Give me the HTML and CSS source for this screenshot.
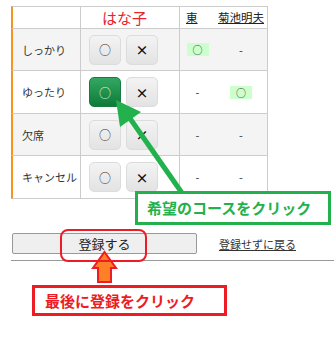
FILE: index.html
```html
<html>
<head>
  <meta charset="UTF-8">
  <link rel="stylesheet" href="styles.css">
</head>
<body>
  <div class="page">
    <table class="entry">
      <tr class="head">
        <th class="label"></th>
        <th class="pick"><span class="name">はな子</span></th>
        <th class="other"><a class="member m1">東</a></th>
        <th class="other last"><a class="member m2">菊池明夫</a></th>
      </tr>
      <tr class="row odd">
        <td class="label">しっかり</td>
        <td class="pick"><button class="mark">○</button><button class="mark cross">×</button></td>
        <td class="other"><span class="ok">○</span></td>
        <td class="other last">-</td>
      </tr>
      <tr class="row even">
        <td class="label">ゆったり</td>
        <td class="pick"><button class="mark on">○</button><button class="mark cross">×</button></td>
        <td class="other">-</td>
        <td class="other last"><span class="ok">○</span></td>
      </tr>
      <tr class="row odd">
        <td class="label">欠席</td>
        <td class="pick"><button class="mark">○</button><button class="mark cross">×</button></td>
        <td class="other">-</td>
        <td class="other last">-</td>
      </tr>
      <tr class="row even">
        <td class="label">キャンセル</td>
        <td class="pick"><button class="mark">○</button><button class="mark cross">×</button></td>
        <td class="other">-</td>
        <td class="other last">-</td>
      </tr>
    </table>

    <div class="actions">
      <button class="submit">登録する</button>
      <a class="back">登録せずに戻る</a>
    </div>
  </div>

  <!-- annotations drawn on top of the screenshot -->
  <svg class="marks" width="334" height="339" viewBox="0 0 334 339">
    <line x1="182" y1="193" x2="129" y2="117" stroke="#22b14c" stroke-width="5"/>
    <polygon points="116,100 141,112 120,127" fill="#22b14c"/>
    <polygon points="104.5,252 116,268 111,268 111,282 98,282 98,268 93,268" fill="#ff7f27" stroke="#ed1c24" stroke-width="2" stroke-linejoin="miter"/>
  </svg>
  <div class="ring"></div>
  <div class="note note-green">希望のコースをクリック</div>
  <div class="note note-red">最後に登録をクリック</div>
</body>
</html>
```

FILE: styles.css
```css
body {
  background-color: white;
  margin: 0;
  padding: 0;
  width: 334px;
  height: 339px;
  overflow: hidden;
  position: relative;
  font-family: "Noto Sans CJK JP", "Noto Sans", sans-serif;
  color: #333;
}

.page {
  padding: 6px 0 0 11px;
}

.entry {
  border-collapse: separate;
  border-spacing: 0;
  table-layout: fixed;
  width: 257px;
}

.entry th,
.entry td {
  box-sizing: border-box;
  padding: 0;
  border-bottom: 1px solid #ccc;
  font-weight: normal;
  vertical-align: middle;
}

.head th {
  border-top: 1px solid #ccc;
  height: 23px;
  background-color: white;
}

.row.odd td {
  height: 42px;
  background-color: #f4f4f4;
}

.row.even td {
  height: 43px;
  background-color: white;
}

.label {
  width: 70px;
  border-left: 2px solid #f7941d;
  border-right: 1px solid #ccc;
  padding-left: 9px !important;
  font-size: 11px;
  text-align: left;
  white-space: nowrap;
}

.pick {
  width: 99px;
  border-right: 1px solid #ccc;
  padding-left: 8px !important;
  text-align: left;
  white-space: nowrap;
}

.other {
  width: 35px;
  text-align: center;
  font-size: 11px;
}

.other.last {
  width: 53px;
  border-right: 1px solid #ccc;
}

.name {
  display: inline-block;
  padding-left: 13px;
  color: #e8242a;
  font-size: 15px;
  line-height: 18px;
}

.member {
  display: block;
  text-align: left;
  color: #222;
  font-size: 11.5px;
  line-height: 15px;
  text-decoration: underline;
}

.m1 {
  padding-left: 6px;
}

.m2 {
  padding-left: 3px;
}

.mark {
  width: 32px;
  height: 30px;
  margin: 0 5px 0 0;
  padding: 0;
  border: 1px solid #dcdcdc;
  border-radius: 5px;
  background: linear-gradient(#f3f3f3, #e3e3e3);
  color: #333;
  font-family: "Noto Sans CJK JP", sans-serif;
  font-size: 12px;
  vertical-align: middle;
}

.mark.cross {
  font-weight: bold;
  font-size: 13px;
  color: #111;
}

.mark.on {
  border-color: #197a3e;
  background: linear-gradient(#33a862, #0e7a3a);
  color: #e8f5c8;
}

.ok {
  display: inline-block;
  width: 22px;
  height: 13px;
  line-height: 13px;
  background-color: #ccffcc;
  font-size: 10px;
}

.actions {
  display: flex;
  align-items: center;
  margin-top: 34px;
  padding-bottom: 6px;
  border-bottom: 1px solid #999;
}

.submit {
  width: 185px;
  height: 21px;
  margin-left: 1px;
  padding: 0;
  border: 1px solid #999;
  border-radius: 2px;
  background-color: #efefef;
  color: #222;
  font-family: "Noto Sans CJK JP", sans-serif;
  font-size: 13px;
  line-height: 17px;
}

.back {
  margin-left: 22px;
  font-size: 11px;
  color: #333;
  text-decoration: underline;
}

.marks {
  position: absolute;
  left: 0;
  top: 0;
  pointer-events: none;
}

.ring {
  position: absolute;
  left: 60px;
  top: 229px;
  width: 83px;
  height: 29px;
  border: 2px solid #ed1c24;
  border-radius: 8px;
}

.note {
  position: absolute;
  box-sizing: border-box;
  border: 3px solid;
  font-weight: bold;
  font-size: 15px;
  line-height: 18px;
  white-space: nowrap;
}

.note-green {
  left: 135px;
  top: 191px;
  width: 196px;
  height: 34px;
  padding: 5px 0 0 9px;
  border-color: #22b14c;
  background-color: white;
  color: #22b14c;
}

.note-red {
  left: 32px;
  top: 285px;
  width: 195px;
  height: 31px;
  padding: 4px 0 0 10px;
  border-color: #ed1c24;
  background-color: white;
  color: #ed1c24;
}
```
